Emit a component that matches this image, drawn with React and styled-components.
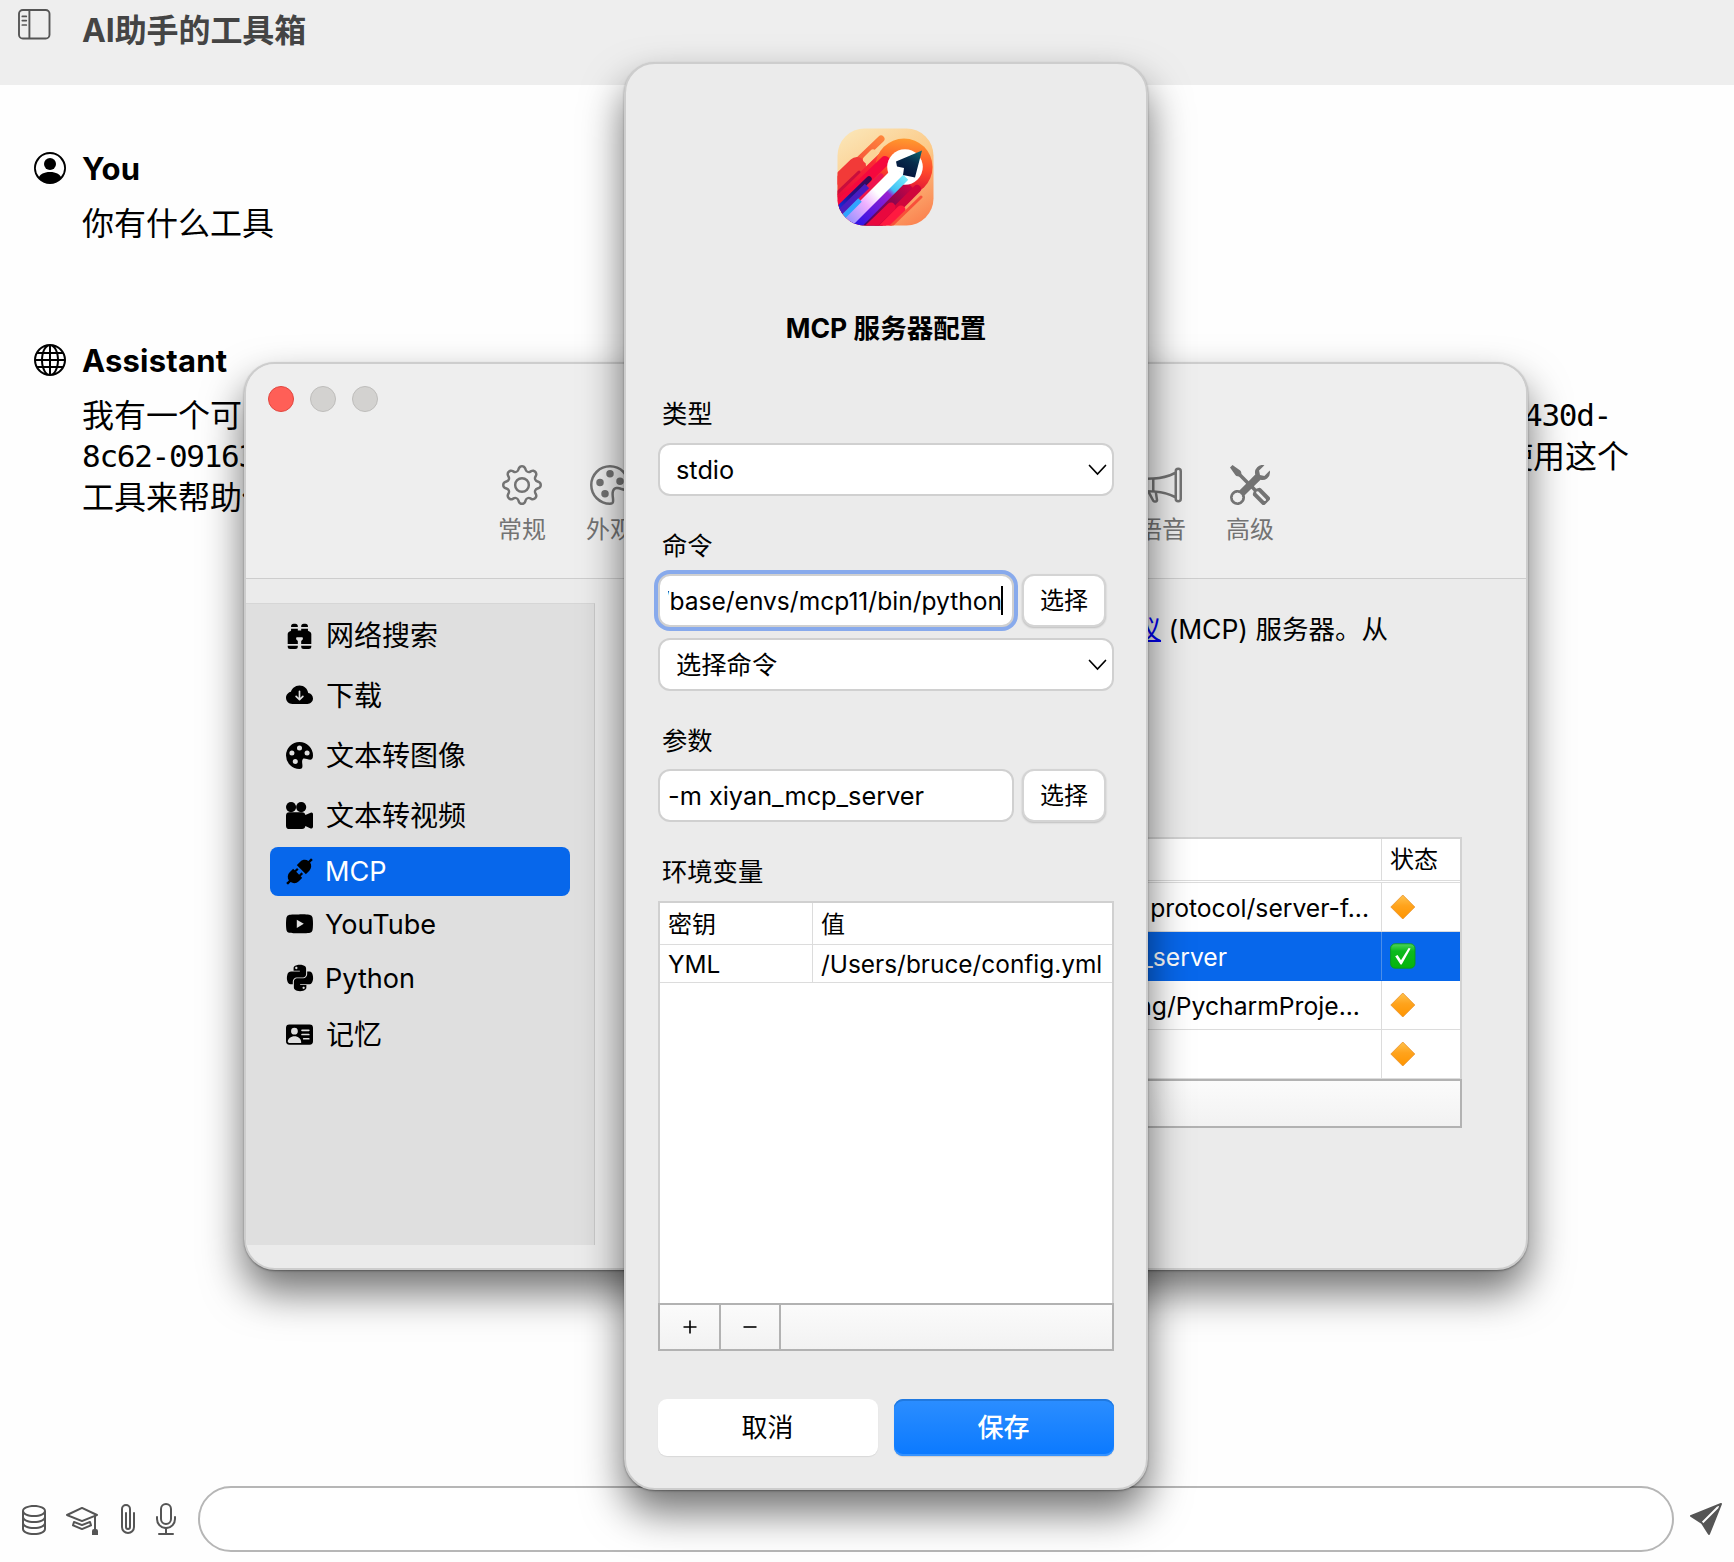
import React from "react";
import styled, { createGlobalStyle, css } from "styled-components";
import {
  BsPersonCircle, BsGlobe, BsGear, BsPalette, BsMegaphone, BsTools,
  BsBinocularsFill, BsCloudArrowDownFill, BsPaletteFill, BsCameraReelsFill,
  BsYoutube, BsPersonVcardFill, BsDatabase, BsMortarboard, BsPaperclip,
  BsMic, BsSendFill,
} from "react-icons/bs";
import { AiFillApi } from "react-icons/ai";
import { FaPython } from "react-icons/fa";

const GlobalStyle = createGlobalStyle`
  * { box-sizing: border-box; }
  body {
    margin: 0;
    font-family: Inter, "Noto Sans CJK SC", sans-serif;
    color: #000;
    background: #fefefe;
  }
  svg { display: block; flex: none; }
`;

const Screen = styled.div`
  position: relative;
  display: flex;
  flex-direction: column;
  width: 1734px;
  height: 1562px;
  overflow: hidden;
  background: #fefefe;
`;

/* ---------- chat ---------- */

const ChatHeader = styled.header`
  display: flex;
  align-items: flex-start;
  gap: 31px;
  height: 85px;
  padding: 8px 18px;
  background: #eee;
  color: #444;
`;

const ChatTitle = styled.h1`
  margin: 0;
  font-size: 32px;
  line-height: 46px;
  font-weight: 700;
  letter-spacing: -0.1px;
`;

const Messages = styled.main`
  flex: 1;
  padding: 67px 34px 0;
`;

const Message = styled.article`
  display: flex;
  gap: 16px;
  height: 192px;
`;

const MessageBody = styled.div`
  flex: 1;
  font-size: 32px;
  line-height: 41px;
`;

const Author = styled.div`
  height: 51px;
  font-size: 31px;
  line-height: 34px;
  font-weight: 700;
  letter-spacing: 0.2px;
`;

const Line = styled.div`
  display: flex;
  justify-content: space-between;
  width: ${(p) => (p.$width ? `${p.$width}px` : "auto")};
  height: 41px;
  white-space: nowrap;
`;

const Code = styled.code`
  font-family: "DejaVu Sans Mono", monospace;
  font-size: 31px;
  letter-spacing: -1.28px;
`;

const Composer = styled.footer`
  display: flex;
  align-items: center;
  height: 86px;
  padding: 0 12px 0 18px;
  color: #555;
`;

const ToolIcon = styled.span`
  display: flex;
  margin-right: ${(p) => p.$gap}px;
`;

const Prompt = styled.div`
  flex: 1;
  height: 66px;
  margin-right: 16px;
  border: 2px solid #b6b6b6;
  border-radius: 33px;
  background: #fff;
`;

/* ---------- windows ---------- */

const windowFrame = css`
  position: absolute;
  display: flex;
  flex-direction: column;
  border: 2px solid #cdcdcd;
  border-radius: 31px;
  background: #ebebeb;
  box-shadow: 0 1px 2px rgba(0, 0, 0, 0.35), 0 22px 42px rgba(0, 0, 0, 0.56);
`;

const SettingsWindow = styled.section`
  ${windowFrame}
  left: 244px;
  top: 362px;
  width: 1284px;
  height: 908px;
  overflow: hidden;
`;

const TitleBar = styled.div`
  height: 215px;
  border-bottom: 1px solid #cdcdcd;
  background: #eee;
`;

const Lights = styled.div`
  display: flex;
  gap: 16px;
  height: 101px;
  padding: 22px 22px 0;
`;

const Light = styled.span`
  width: 26px;
  height: 26px;
  border: 1px solid ${(p) => (p.$on ? "#e2463f" : "#bebdbb")};
  border-radius: 50%;
  background: ${(p) => (p.$on ? "#ff5f57" : "#d3d2d0")};
`;

const Tabs = styled.nav`
  display: flex;
  justify-content: space-between;
  padding: 0 232px;
  color: #737373;
`;

const TabGroup = styled.div`
  display: flex;
`;

const Tab = styled.div`
  display: flex;
  flex-direction: column;
  align-items: center;
  gap: 8px;
  width: 88px;
  font-size: 24px;
  line-height: 34px;
`;

const SettingsBody = styled.div`
  display: flex;
  flex: 1;
  padding: 24px 64px 23px 0;
`;

const Sidebar = styled.aside`
  width: 349px;
  padding: 3px 24px 0;
  border-right: 1px solid #cacaca;
  border-top: 1px solid #d6d6d6;
  background: #dfdfdf;
`;

const SideItem = styled.div`
  display: flex;
  align-items: center;
  height: ${(p) => (p.$latin ? 49 : 56)}px;
  margin-bottom: 4.1px;
  padding: 0 16px;
  border-radius: 8px;
  font-size: ${(p) => (p.$latin ? 27.1 : 28)}px;
  white-space: nowrap;
  ${(p) => p.$active && css`background: #0767eb;`}
`;

const SideIcon = styled.span`
  display: flex;
  align-items: center;
  justify-content: center;
  width: 27px;
`;

const SideLabel = styled.span`
  padding: 0 0 ${(p) => (p.$latin ? 0 : 3)}px ${(p) => (p.$latin ? 12 : 13)}px;
  color: ${(p) => (p.$active ? "#fff" : "#000")};
`;

const Panel = styled.div`
  display: flex;
  flex-direction: column;
  flex: 1;
  padding-left: 64px;
`;

const Intro = styled.p`
  height: 234px;
  margin: 0;
  padding: 7px 74px 0 0;
  font-size: 26.5px;
  line-height: 38px;
  text-align: right;
  white-space: nowrap;
`;

const DocLink = styled.span`
  color: #0000ee;
  text-decoration: underline;
  text-decoration-thickness: 2px;
`;

const ServerTable = styled.div`
  border: 2px solid #d2d2d2;
  border-bottom: 0;
  background: #fff;
`;

const ServerRow = styled.div`
  display: grid;
  grid-template-columns: 1fr 78px;
  height: ${(p) => (p.$head ? 42 : 49)}px;
  border-bottom: 1px solid #dcdcdc;
  ${(p) => p.$head && css`margin-bottom: 2px; box-shadow: 0 1px #fff, 0 2px #dcdcdc;`}
  ${(p) => p.$active && css`background: #0767eb; color: #fff; border-color: #0767eb;`}
`;

const CommandCell = styled.div`
  display: flex;
  align-items: center;
  justify-content: flex-end;
  padding: 2px ${(p) => p.$end}px 0 0;
  border-right: 1px solid ${(p) => (p.$active ? "#4a8eea" : "#dcdcdc")};
  font-size: 24.7px;
  white-space: nowrap;
`;

const StatusCell = styled.div`
  display: flex;
  align-items: center;
  padding: 0 0 ${(p) => (p.$head ? 4 : 1)}px 8px;
  font-size: 24px;
`;

const ActionBar = styled.div`
  display: flex;
  height: ${(p) => p.$height}px;
  border: 2px solid #b2b2b2;
  background: linear-gradient(#fbfbfb, #f2f2f2);
`;

const ActionKey = styled.button`
  display: flex;
  align-items: center;
  justify-content: center;
  width: ${(p) => p.$width}px;
  padding: 0 0 1px 0;
  border: 0;
  border-right: 2px solid #b2b2b2;
  background: none;
`;

/* ---------- dialog ---------- */

const Dialog = styled.section`
  ${windowFrame}
  left: 624px;
  top: 62px;
  width: 524px;
  height: 1428px;
  padding: 64px 32px 32px;
`;

const LogoBox = styled.div`
  display: flex;
  justify-content: center;
  height: 181px;
  padding-right: 2px;
`;

const DialogTitle = styled.h2`
  height: 86px;
  margin: 0;
  font-size: 26.5px;
  line-height: 38px;
  font-weight: 700;
  letter-spacing: 0.05px;
  text-align: center;
`;

const Field = styled.div`
  display: flex;
  flex-direction: column;
  height: ${(p) => p.$height}px;
`;

const Label = styled.label`
  height: 48px;
  padding: ${(p) => p.$top ?? 2}px 0 0 4px;
  font-size: 25.3px;
  line-height: 36px;
`;

const SelectBox = styled.div`
  display: flex;
  align-items: center;
  justify-content: space-between;
  height: 53px;
  margin-top: ${(p) => p.$top || 0}px;
  padding: 0 5px 0 16px;
  border: 2px solid #d0d0d0;
  border-radius: 12px;
  background: #fff;
  font-size: 25.3px;
`;

const SelectText = styled.span`
  padding-bottom: ${(p) => p.$lift || 0}px;
`;

const InputRow = styled.div`
  display: flex;
  gap: 8px;
`;

const Input = styled.div`
  display: flex;
  align-items: center;
  width: 356px;
  height: 53px;
  padding: 0 9px 0 8px;
  border: 2px solid #d0d0d0;
  border-radius: 12px;
  background: #fff;
  font-size: ${(p) => (p.$focus ? 24.55 : 25.3)}px;
  white-space: nowrap;
  ${(p) => p.$focus && css`box-shadow: 0 0 0 4px #88aaec;`}
`;

const InputClip = styled.div`
  display: flex;
  flex: 1;
  align-items: center;
  justify-content: ${(p) => (p.$end ? "flex-end" : "flex-start")};
  min-width: 0;
  overflow: hidden;
`;

const Caret = styled.i`
  flex: none;
  width: 2px;
  height: 29px;
  margin-left: -1px;
  background: #000;
`;

const PickButton = styled.button`
  width: 84px;
  height: 53px;
  padding: 0 0 4px;
  border: 2px solid #d4d4d4;
  border-radius: 12px;
  background: #fff;
  box-shadow: 0 1px 2px rgba(0, 0, 0, 0.2);
  font: 24px Inter, "Noto Sans CJK SC", sans-serif;
  color: #000;
`;

const EnvTable = styled.div`
  height: 402px;
  border: 2px solid #d0d0d0;
  border-bottom: 0;
  background: #fff;
`;

const EnvRow = styled.div`
  display: grid;
  grid-template-columns: 152px 1fr;
  height: ${(p) => (p.$head ? 42 : 38)}px;
  border-bottom: 1px solid #dcdcdc;
  font-size: ${(p) => (p.$head ? 24 : 24.4)}px;
  white-space: nowrap;
`;

const EnvCell = styled.div`
  display: flex;
  align-items: center;
  padding: 0 0 ${(p) => (p.$head ? 3 : 0)}px 8px;
  & + & { border-left: 1px solid #dcdcdc; }
`;

const Buttons = styled.div`
  display: flex;
  gap: 16px;
  margin-top: 48px;
`;

const DialogButton = styled.button`
  flex: 1;
  height: 57px;
  border: 0;
  border-radius: 9px;
  padding: 0 1px 4px 0;
  font: 26px Inter, "Noto Sans CJK SC", sans-serif;
  color: #000;
  background: #fff;
  box-shadow: 0 1px 1px rgba(0, 0, 0, 0.08);
  ${(p) => p.$primary && css`
    color: #fff;
    font-weight: 500;
    background: linear-gradient(#2c8eff, #0a79ff);
    box-shadow: inset 0 2px #2079e0, inset 0 -2px #3492ff, 0 1px 1px rgba(0, 0, 0, 0.12);
  `}
`;

/* ---------- drawings ---------- */

const SidebarToggle = () => (
  <svg width="33" height="33" viewBox="0 0 33 33" fill="none" stroke="#555" strokeWidth="1.9">
    <rect x="1" y="2" width="30.5" height="28.5" rx="3.8" />
    <path d="M11.4 2v28.5" />
    <path d="M4.3 8.4h4M4.3 12.6h4M4.3 17h4" strokeLinecap="round" strokeWidth="1.7" />
  </svg>
);

const Chevron = () => (
  <svg width="19" height="12" viewBox="0 0 19 12" fill="none" stroke="#000" strokeWidth="1.7">
    <path d="M1.5 1.500 9.500 10l8-8.500" strokeLinecap="round" />
  </svg>
);

const Plus = () => (
  <svg width="14" height="14" viewBox="0 0 14 14" stroke="#000" strokeWidth="1.6"><path d="M7 .5v13M.5 7h13" /></svg>
);

const Minus = () => (
  <svg width="14" height="14" viewBox="0 0 14 14" stroke="#000" strokeWidth="1.6"><path d="M.5 7h13" /></svg>
);

const Diamond = () => (
  <svg width="26" height="26" viewBox="0 0 26 26">
    <defs>
      <linearGradient id="diamond" x1="0" y1="0" x2="0" y2="1">
        <stop offset="0" stopColor="#ffc24d" />
        <stop offset=".45" stopColor="#ffa31c" />
        <stop offset="1" stopColor="#ff9500" />
      </linearGradient>
    </defs>
    <path d="M12.800 1 24.800 13 12.800 25 .8 13Z" fill="url(#diamond)" stroke="#e8922a" strokeWidth=".8" strokeLinejoin="round" />
  </svg>
);

const Check = () => (
  <svg width="26" height="26" viewBox="0 0 26 26">
    <defs>
      <linearGradient id="check" x1="0" y1="0" x2="0" y2="1">
        <stop offset="0" stopColor="#4fd45c" />
        <stop offset=".3" stopColor="#0cba1d" />
        <stop offset="1" stopColor="#06b40c" />
      </linearGradient>
    </defs>
    <rect x=".6" y=".8" width="24.400" height="24.400" rx="4.500" fill="url(#check)" stroke="#0a9a1a" strokeWidth=".9" />
    <path d="M5.200 13.200 7.600 12l3.400 5.300L18.600 5l2 .5L11.700 21.400h-1.200Z" fill="#fff" />
  </svg>
);

const Logo = () => (
  <svg width="97" height="98" viewBox="0 0 97 98">
    <defs>
      <clipPath id="tile"><rect x=".5" y=".5" width="96" height="97" rx="27" /></clipPath>
      <linearGradient id="sky" x1=".2" y1="0" x2=".8" y2="1">
        <stop offset="0" stopColor="#fbe4b4" /><stop offset=".5" stopColor="#fcc987" /><stop offset="1" stopColor="#fb8350" />
      </linearGradient>
      <linearGradient id="halo" gradientUnits="userSpaceOnUse" x1="66" y1="10" x2="60" y2="70">
        <stop offset="0" stopColor="#ff9a2e" /><stop offset=".5" stopColor="#ff4a2c" /><stop offset="1" stopColor="#d80238" />
      </linearGradient>
      <linearGradient id="band" gradientUnits="userSpaceOnUse" x1="58" y1="24" x2="4" y2="78">
        <stop offset="0" stopColor="#ff7a2e" /><stop offset=".3" stopColor="#fa2a34" /><stop offset="1" stopColor="#e8083c" />
      </linearGradient>
      <linearGradient id="flame" gradientUnits="userSpaceOnUse" x1="50" y1="8" x2="4" y2="56">
        <stop offset="0" stopColor="#ff8a3c" /><stop offset="1" stopColor="#f02c38" />
      </linearGradient>
      <linearGradient id="shaft" gradientUnits="userSpaceOnUse" x1="64" y1="46" x2="10" y2="98">
        <stop offset="0" stopColor="#fff" /><stop offset=".4" stopColor="#fff" /><stop offset=".62" stopColor="#efb0ff" /><stop offset="1" stopColor="#8a8cff" />
      </linearGradient>
      <linearGradient id="cyan" gradientUnits="userSpaceOnUse" x1="68" y1="46" x2="20" y2="98">
        <stop offset="0" stopColor="#7ceefc" /><stop offset=".28" stopColor="#3fc0f4" /><stop offset=".36" stopColor="#9a1fd0" /><stop offset="1" stopColor="#2a14e8" />
      </linearGradient>
      <linearGradient id="night" gradientUnits="userSpaceOnUse" x1="34" y1="50" x2="0" y2="88">
        <stop offset="0" stopColor="#3a0a4c" /><stop offset=".5" stopColor="#23108a" /><stop offset="1" stopColor="#1436ff" />
      </linearGradient>
      <linearGradient id="plum" gradientUnits="userSpaceOnUse" x1="76" y1="54" x2="30" y2="98">
        <stop offset="0" stopColor="#d80440" /><stop offset=".45" stopColor="#8a0650" /><stop offset="1" stopColor="#4a0868" />
      </linearGradient>
      <linearGradient id="tip" x1=".9" y1="0" x2=".4" y2="1">
        <stop offset="0" stopColor="#0a6670" /><stop offset=".45" stopColor="#072c4c" /><stop offset="1" stopColor="#04113a" />
      </linearGradient>
    </defs>
    <g clipPath="url(#tile)" strokeLinecap="round" fill="none">
      <rect width="97" height="98" fill="url(#sky)" />
      <path d="M44 11 0 53" stroke="url(#flame)" strokeWidth="7" />
      <path d="M20 38-10 67" stroke="#f23a38" strokeWidth="18" />
      <path d="M66 40-2 106" stroke="url(#band)" strokeWidth="54" />
      <path d="M36 25 29.500 31.500" stroke="#fbd496" strokeWidth="7" />
      <circle cx="67" cy="39" r="28.500" fill="url(#halo)" />
      <path d="M48 33-4 83" stroke="#f5083e" strokeWidth="10" />
      <path d="M22 44-2 67" stroke="#c90e3c" strokeWidth="3" />
      <path d="M32 51-6 88" stroke="url(#night)" strokeWidth="5.500" />
      <path d="M44 48-2 93" stroke="#ee1450" strokeWidth="5" />
      <path d="M30 58-4 91" stroke="#4a1cc0" strokeWidth="6" strokeLinecap="butt" />
      <path d="M74 58 27 104" stroke="url(#plum)" strokeWidth="17" strokeLinecap="butt" />
      <path d="M80 61 37 104" stroke="#d0063c" strokeWidth="8" />
      <circle cx="68" cy="39" r="17.800" fill="#fff" />
      <path d="M67 47.500 15 100" stroke="url(#cyan)" strokeWidth="12" strokeLinecap="butt" />
      <path d="M62 42.500 5 99.500" stroke="url(#shaft)" strokeWidth="12" strokeLinecap="butt" />
      <path d="M23 72 1 94" stroke="#2fa4ff" strokeWidth="5" strokeLinecap="butt" />
      <path d="M54 79 28 104" stroke="#e8083e" strokeWidth="9" />
      <path d="M64 82 44 102" stroke="#ff1a40" strokeWidth="9" />
      <path d="M84 69 54 98" stroke="#f8503a" strokeWidth="3" />
      <path d="M85 22.500 59 33.500 60 38.500 67 40 66 47 78 49.500Z" fill="url(#tip)" />
    </g>
  </svg>
);

/* ---------- data ---------- */

const SIDE_ITEMS = [
  { label: "网络搜索", Icon: BsBinocularsFill },
  { label: "下载", Icon: BsCloudArrowDownFill },
  { label: "文本转图像", Icon: BsPaletteFill },
  { label: "文本转视频", Icon: BsCameraReelsFill },
  { label: "MCP", Icon: AiFillApi, size: 33, latin: true, active: true },
  { label: "YouTube", Icon: BsYoutube, latin: true },
  { label: "Python", Icon: FaPython, size: 30, latin: true },
  { label: "记忆", Icon: BsPersonVcardFill },
];

const SERVERS = [
  { command: "protocol/server-f...", end: 12 },
  { command: "_server", end: 154, active: true },
  { command: "ng/PycharmProje...", end: 21 },
  { command: "", end: 0 },
];

const COMPOSER_TOOLS = [
  [BsDatabase, 16], [BsMortarboard, 14], [BsPaperclip, 6], [BsMic, 16],
];

const ToolbarTab = ({ Icon, label }) => (
  <Tab><Icon size={40} /><span>{label}</span></Tab>
);

export default function App() {
  return (
    <Screen>
      <GlobalStyle />
      <ChatHeader>
        <SidebarToggle />
        <ChatTitle>AI助手的工具箱</ChatTitle>
      </ChatHeader>
      <Messages>
        <Message>
          <BsPersonCircle size={32} />
          <MessageBody>
            <Author>You</Author>
            <Line>你有什么工具</Line>
          </MessageBody>
        </Message>
        <Message>
          <BsGlobe size={32} />
          <MessageBody>
            <Author>Assistant</Author>
            <Line $width={1529}><span>我有一个可</span><Code>430d-</Code></Line>
            <Line $width={1547}><Code>8c62-09163</Code><span>使用这个</span></Line>
            <Line>工具来帮助你</Line>
          </MessageBody>
        </Message>
      </Messages>
      <Composer>
        {COMPOSER_TOOLS.map(([Icon, gap], i) => (
          <ToolIcon key={i} $gap={gap}><Icon size={32} /></ToolIcon>
        ))}
        <Prompt />
        <ToolIcon $gap={0}><BsSendFill size={32} /></ToolIcon>
      </Composer>

      <SettingsWindow>
        <TitleBar>
          <Lights><Light $on /><Light /><Light /></Lights>
          <Tabs>
            <TabGroup>
              <ToolbarTab Icon={BsGear} label="常规" />
              <ToolbarTab Icon={BsPalette} label="外观" />
            </TabGroup>
            <TabGroup>
              <ToolbarTab Icon={BsMegaphone} label="语音" />
              <ToolbarTab Icon={BsTools} label="高级" />
            </TabGroup>
          </Tabs>
        </TitleBar>
        <SettingsBody>
          <Sidebar>
            {SIDE_ITEMS.map(({ label, Icon, size = 27, latin, active }) => (
              <SideItem key={label} $latin={latin} $active={active}>
                <SideIcon><Icon size={size} /></SideIcon>
                <SideLabel $latin={latin} $active={active}>{label}</SideLabel>
              </SideItem>
            ))}
          </Sidebar>
          <Panel>
            <Intro><DocLink>协议</DocLink> (MCP) 服务器。从</Intro>
            <ServerTable>
              <ServerRow $head>
                <CommandCell $end={0} />
                <StatusCell $head>状态</StatusCell>
              </ServerRow>
              {SERVERS.map(({ command, end, active }, i) => (
                <ServerRow key={i} $active={active}>
                  <CommandCell $end={end} $active={active}>{command}</CommandCell>
                  <StatusCell>{active ? <Check /> : <Diamond />}</StatusCell>
                </ServerRow>
              ))}
            </ServerTable>
            <ActionBar $height={49} />
          </Panel>
        </SettingsBody>
      </SettingsWindow>

      <Dialog>
        <LogoBox><Logo /></LogoBox>
        <DialogTitle>MCP 服务器配置</DialogTitle>
        <Field $height={131}>
          <Label $top={1}>类型</Label>
          <SelectBox><SelectText>stdio</SelectText><Chevron /></SelectBox>
        </Field>
        <Field $height={195}>
          <Label>命令</Label>
          <InputRow>
            <Input $focus>
              <InputClip $end><span>/base/envs/mcp11/bin/python</span></InputClip>
              <Caret />
            </Input>
            <PickButton>选择</PickButton>
          </InputRow>
          <SelectBox $top={11}><SelectText $lift={3}>选择命令</SelectText><Chevron /></SelectBox>
        </Field>
        <Field $height={132}>
          <Label>参数</Label>
          <InputRow>
            <Input><InputClip><span>-m xiyan_mcp_server</span></InputClip></Input>
            <PickButton>选择</PickButton>
          </InputRow>
        </Field>
        <Label $top={1}>环境变量</Label>
        <EnvTable>
          <EnvRow $head><EnvCell $head>密钥</EnvCell><EnvCell $head>值</EnvCell></EnvRow>
          <EnvRow><EnvCell>YML</EnvCell><EnvCell>/Users/bruce/config.yml</EnvCell></EnvRow>
        </EnvTable>
        <ActionBar $height={48}>
          <ActionKey $width={61}><Plus /></ActionKey>
          <ActionKey $width={60}><Minus /></ActionKey>
        </ActionBar>
        <Buttons>
          <DialogButton>取消</DialogButton>
          <DialogButton $primary>保存</DialogButton>
        </Buttons>
      </Dialog>
    </Screen>
  );
}
